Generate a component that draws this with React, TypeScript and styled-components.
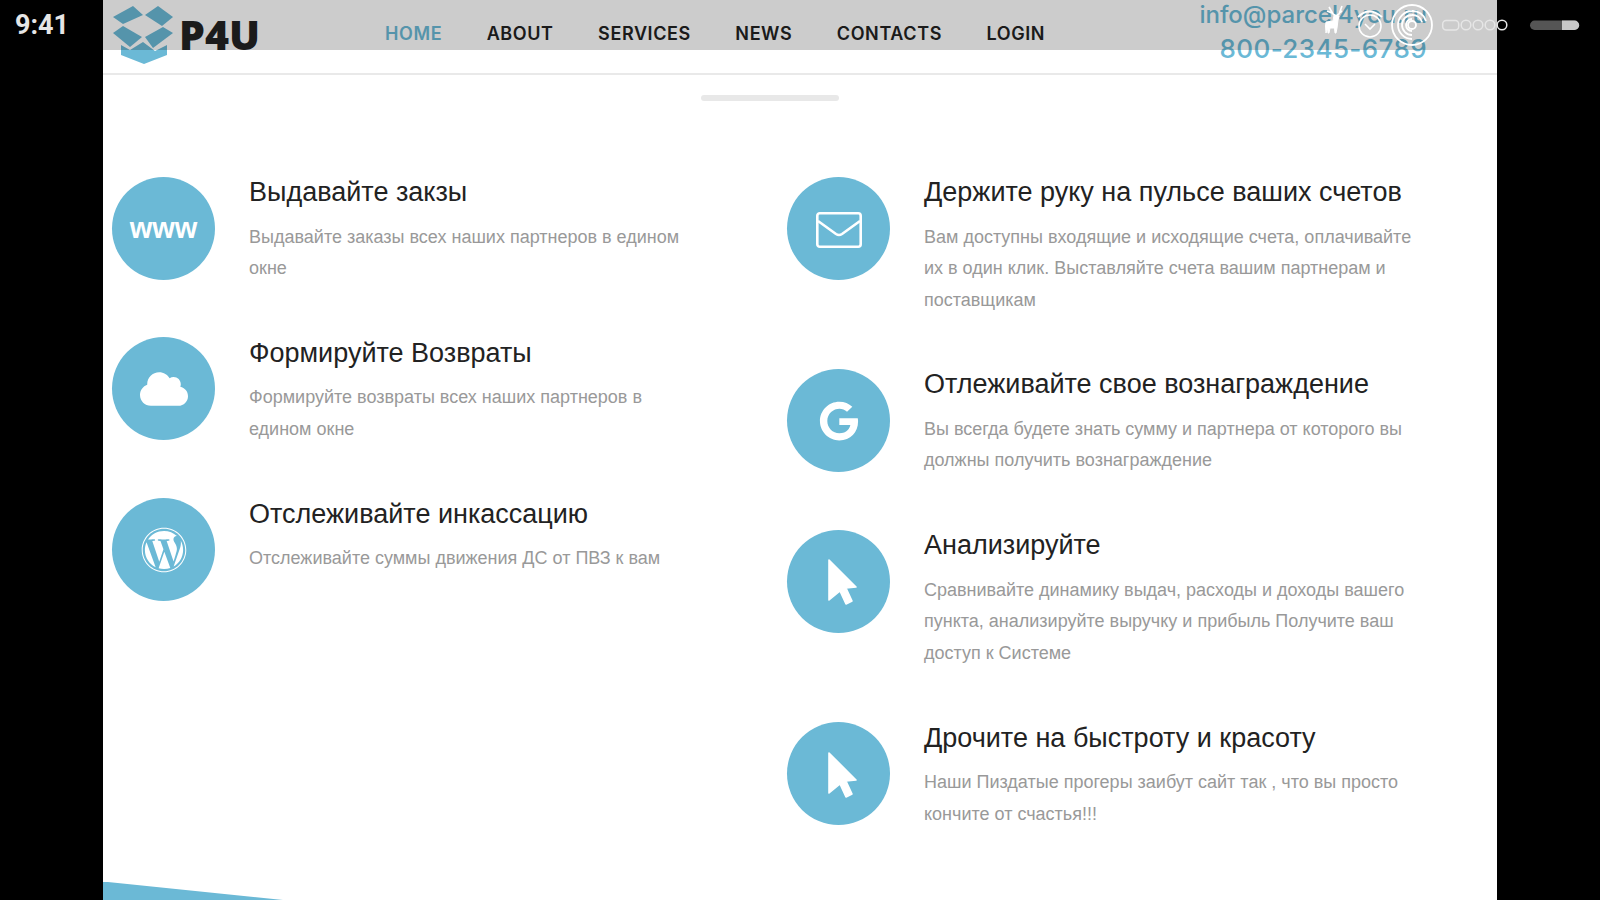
import React from "react";
import styled, { createGlobalStyle } from "styled-components";
import { FaCloud, FaGoogle, FaWordpress } from "react-icons/fa";

const GlobalStyle = createGlobalStyle`
  html, body {
    margin: 0;
    height: 900px;
    overflow: hidden;
    background: #000;
  }
  * { box-sizing: border-box; }
`;

const Page = styled.div`
  position: relative;
  width: 1394px;
  height: 900px;
  margin-left: 103px;
  background: #fff;
  display: flex;
  flex-direction: column;
  font-family: "Liberation Sans", Arial, sans-serif;
`;

const Header = styled.header`
  height: 75px;
  flex: none;
  border-bottom: 2px solid #e9e9e9;
  display: flex;
  align-items: flex-start;
  padding-left: 9px;
`;

const Brand = styled.div`
  display: flex;
  align-items: flex-start;
  width: 273px;
  padding-top: 5px;
`;

const LogoSvg = styled.svg`
  width: 62px;
  height: 59px;
  flex: none;
`;

const BrandName = styled.div`
  font-family: "Open Sans", sans-serif;
  font-weight: 800;
  font-size: 41px;
  line-height: 48px;
  color: #222;
  margin: 5px 0 0 5px;
`;

const Nav = styled.nav`
  display: flex;
  gap: 44.5px;
  padding-top: 22px;
`;

const NavLink = styled.a<{ $active?: boolean }>`
  font-family: Inter, sans-serif;
  font-weight: 600;
  font-size: 18px;
  line-height: 24px;
  letter-spacing: 0.6px;
  color: ${({ $active }) => ($active ? "#6bb9d6" : "#222")};
`;

const Contacts = styled.div`
  margin-left: auto;
  width: 230px;
  margin-right: 70px;
  color: #6bb9d6;
  font-family: Inter, sans-serif;
  font-weight: 500;
  display: flex;
  flex-direction: column;
  align-items: flex-end;
`;

const Email = styled.div`
  font-size: 24px;
  line-height: 30px;
  white-space: nowrap;
`;

const Phone = styled.div`
  font-size: 26px;
  line-height: 38px;
  letter-spacing: 0.4px;
  white-space: nowrap;
`;

const Divider = styled.div`
  width: 138px;
  height: 6px;
  flex: none;
  margin: 20px 0 0 598px;
  border-radius: 3px;
  background: #e8e8e8;
`;

const Columns = styled.div`
  display: grid;
  grid-template-columns: 578px 1fr;
  column-gap: 97px;
  padding: 75.7px 80px 0 9px;
`;

const Column = styled.div`
  display: flex;
  flex-direction: column;
`;

const Item = styled.div`
  display: flex;
  gap: 34px;
  margin-bottom: 52.8px;
`;

const IconCircle = styled.div`
  width: 103px;
  height: 103px;
  flex: none;
  border-radius: 50%;
  background: #6bb9d6;
  color: #fff;
  display: flex;
  align-items: center;
  justify-content: center;
`;

const WwwMark = styled.span`
  font-family: "Liberation Sans", sans-serif;
  font-weight: 700;
  font-size: 29px;
  line-height: 1;
  margin-top: 1px;
`;

const EnvelopeSvg = styled.svg`
  width: 46px;
  height: 36px;
  margin-top: 4px;
`;

const CursorSvg = styled.svg`
  width: 30px;
  height: 46px;
  margin: 2px 0 0 8px;
`;

const ItemBody = styled.div`
  flex: 1;
  margin-top: -0.7px;
`;

const ItemTitle = styled.h3`
  margin: 0 0 13.5px;
  font-weight: 400;
  font-size: 27px;
  line-height: 32px;
  color: #222;
`;

const ItemText = styled.p`
  margin: 0;
  font-size: 18px;
  line-height: 31.6px;
  color: #999;
`;

const Wedge = styled.div`
  position: absolute;
  left: 0;
  bottom: 0;
  width: 180px;
  height: 18.5px;
  background: #6bb9d6;
  clip-path: polygon(0 0, 100% 100%, 0 100%);
`;

const Scrim = styled.div`
  position: absolute;
  top: 0;
  left: 103px;
  width: 1394px;
  height: 50px;
  background: rgba(0, 0, 0, 0.2);
`;

const StatusBar = styled.div`
  position: absolute;
  top: 0;
  left: 0;
  width: 1600px;
  height: 50px;
  padding-left: 15px;
  display: flex;
  align-items: center;
`;

const Clock = styled.div`
  font-family: Roboto, sans-serif;
  font-weight: 700;
  font-size: 27px;
  color: #e6e6e6;
`;

const StatusSvg = styled.svg`
  position: absolute;
  left: 1332px;
  top: 0;
  width: 260px;
  height: 50px;
  overflow: visible;
`;

type Feature = {
  icon: React.ReactNode;
  title: string;
  text: string;
};

const EnvelopeIcon = () => (
  <EnvelopeSvg viewBox="0 0 46 36" aria-hidden="true">
    <g fill="none" stroke="#fff" strokeWidth="2.6" strokeLinejoin="round">
      <rect x="1.3" y="1.3" width="43.4" height="33.4" rx="2.5" />
      <path d="M2 9 L20 22 Q23 24 26 22 L44 9" />
    </g>
  </EnvelopeSvg>
);

const CursorIcon = () => (
  <CursorSvg viewBox="0 0 30 46" aria-hidden="true">
    <path
      d="M1 1 L28 28 L18 29 L24 42 L18 45 L12 32 L1 41 Z"
      fill="#fff"
      stroke="#fff"
      strokeWidth="1.6"
      strokeLinejoin="round"
    />
  </CursorSvg>
);

const leftFeatures: Feature[] = [
  {
    icon: <WwwMark>www</WwwMark>,
    title: "Выдавайте закзы",
    text: "Выдавайте заказы всех наших партнеров в едином окне",
  },
  {
    icon: <FaCloud size={48} />,
    title: "Формируйте Возвраты",
    text: "Формируйте возвраты всех наших партнеров в едином окне",
  },
  {
    icon: <FaWordpress size={46} />,
    title: "Отслеживайте инкассацию",
    text: "Отслеживайте суммы движения ДС от ПВЗ к вам",
  },
];

const rightFeatures: Feature[] = [
  {
    icon: <EnvelopeIcon />,
    title: "Держите руку на пульсе ваших счетов",
    text: "Вам доступны входящие и исходящие счета, оплачивайте их в один клик. Выставляйте счета вашим партнерам и поставщикам",
  },
  {
    icon: <FaGoogle size={40} />,
    title: "Отлеживайте свое вознаграждение",
    text: "Вы всегда будете знать сумму и партнера от которого вы должны получить вознаграждение",
  },
  {
    icon: <CursorIcon />,
    title: "Анализируйте",
    text: "Сравнивайте динамику выдач, расходы и доходы вашего пункта, анализируйте выручку и прибыль Получите ваш доступ к Системе",
  },
  {
    icon: <CursorIcon />,
    title: "Дрочите на быстроту и красоту",
    text: "Наши Пиздатые прогеры заибут сайт так , что вы просто кончите от счастья!!!",
  },
];

const navItems = ["HOME", "ABOUT", "SERVICES", "NEWS", "CONTACTS", "LOGIN"];

const Logo = () => (
  <LogoSvg viewBox="0 0 62 59" aria-hidden="true">
    <g fill="#6bb9d6">
      <polygon points="1,12 21,1 31,10 11,19" />
      <polygon points="33,10 46,1 61,12 50,21" />
      <polygon points="1,28 11,21 30,32 18,42" />
      <polygon points="33,32 51,22 61,28 41,43" />
      <polygon points="9,40 18,45 31,37 43,46 55,40 55,50 32,59 9,50" />
    </g>
  </LogoSvg>
);

const StatusIcons = () => (
  <StatusSvg viewBox="0 0 260 50" aria-hidden="true">
    {/* deer */}
    <g fill="#fff" stroke="#fff">
      <path
        d="M-3 7 L1 14 L4 16 M10 6 L7 14 L4 16 M-5 11 L0 13 M10 11 L7 13"
        fill="none"
        strokeWidth="1.6"
      />
      <path
        d="M2 15 L7 16 L6 20 L5 28 L4 33 L3 33 L2.5 28 L-2 28 L-3 33 L-4 33 L-4.5 28 L-6 33 L-6.5 26 L-6 22 L1 21 Z"
        strokeWidth="1"
        strokeLinejoin="round"
      />
    </g>
    {/* alarm */}
    <g fill="none" stroke="#fff" strokeWidth="1.6">
      <circle cx="38" cy="26" r="11" />
      <path d="M33 24 L38 29 L43 24" />
      <path d="M26 17 Q37 6 50 17" strokeWidth="2" />
    </g>
    {/* nfc rings */}
    <g fill="none" stroke="#fff" strokeWidth="1.8">
      <circle cx="80" cy="25" r="20" />
      <circle cx="80" cy="25" r="4" />
      <path d="M80 31 A6 6 0 0 1 74 25 A6 6 0 0 1 80 19" />
      <path d="M80 35 A10 10 0 0 1 70 25 A10 10 0 0 1 80 15 A10 10 0 0 1 90 22" />
      <path d="M80 39 A14 14 0 0 1 66 25 A14 14 0 0 1 80 11 A14 14 0 0 1 94 21" />
    </g>
    {/* signal */}
    <g fill="none" stroke="#e6e6e6" strokeWidth="1.5">
      <rect x="110.7" y="20.5" width="16" height="9.5" rx="3.5" />
      <circle cx="134" cy="25" r="4.8" />
      <circle cx="146" cy="25" r="4.8" />
      <circle cx="158" cy="25" r="4.8" />
      <circle cx="170" cy="25" r="4.8" />
    </g>
    {/* battery */}
    <rect x="198" y="20.5" width="49" height="9.5" rx="4.7" fill="#555" />
    <path d="M230 20.5 H242.5 A4.7 4.7 0 0 1 242.5 30 H230 Z" fill="#c8c8c8" />
  </StatusSvg>
);

const FeatureItem = ({ icon, title, text }: Feature) => (
  <Item>
    <IconCircle>{icon}</IconCircle>
    <ItemBody>
      <ItemTitle>{title}</ItemTitle>
      <ItemText>{text}</ItemText>
    </ItemBody>
  </Item>
);

export default function App() {
  return (
    <>
      <GlobalStyle />
      <Page>
        <Header>
          <Brand>
            <Logo />
            <BrandName>P4U</BrandName>
          </Brand>
          <Nav>
            {navItems.map((item) => (
              <NavLink key={item} $active={item === "HOME"}>
                {item}
              </NavLink>
            ))}
          </Nav>
          <Contacts>
            <Email>info@parcel4you.ru</Email>
            <Phone>800-2345-6789</Phone>
          </Contacts>
        </Header>
        <Divider />
        <Columns>
          <Column>
            {leftFeatures.map((f) => (
              <FeatureItem key={f.title} {...f} />
            ))}
          </Column>
          <Column>
            {rightFeatures.map((f) => (
              <FeatureItem key={f.title} {...f} />
            ))}
          </Column>
        </Columns>
        <Wedge />
      </Page>
      <Scrim />
      <StatusBar>
        <Clock>9:41</Clock>
        <StatusIcons />
      </StatusBar>
    </>
  );
}
